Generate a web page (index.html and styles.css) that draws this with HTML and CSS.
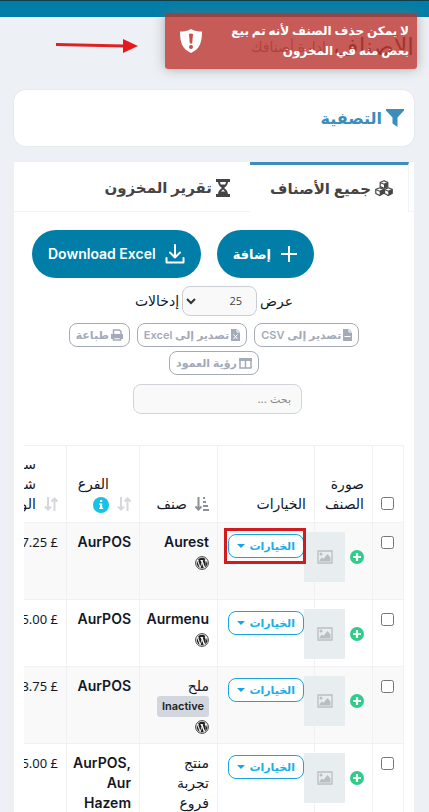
FILE: index.html
```html
<!DOCTYPE html>
<html lang="ar" dir="rtl">
<head>
<meta charset="utf-8">
<meta name="viewport" content="width=device-width, initial-scale=1">
<title>الأصناف</title>
<link rel="stylesheet" href="styles.css">
</head>
<body>
<svg class="sprite" aria-hidden="true">
  <symbol id="i-sort" viewBox="0 0 14 14"><path d="M4 0v12M1 9.500l3 3 3-3M10.500 14V2M7.500 4.500l3-3 3 3" fill="none" stroke="currentColor" stroke-width="2"/></symbol>
  <symbol id="i-sorted" viewBox="0 0 14 14"><path d="M3.500 0v12M.500 9.500l3 3 3-3" fill="none" stroke="currentColor" stroke-width="2"/><path d="M8 0h2v2H8zM8 4h3v2H8zM8 8h5v2H8zM8 12h6v2H8z" fill="currentColor"/></symbol>
  <symbol id="i-wp" viewBox="0 0 16 16"><circle cx="8" cy="8" r="7.300" fill="none" stroke="currentColor"/><path d="M8 2a6 6 0 0 1 4 1.500c-1 .5-1 1.500-.3 2.600.7 1.200.7 2 .3 3.300L11 12 8.700 5.200h.8v-.7H5.800v.7h.8l.9 2.500L6 12 3.700 5.200h.8v-.7H3.100A6 6 0 0 1 8 2zM2.500 5.800l3 7.800A6 6 0 0 1 2.500 5.800zM8.100 8.500l1.900 5.200a6 6 0 0 1-3.600.1zM13.400 5.500a6 6 0 0 1-2.400 7.700l1.900-5.400c.3-.9.5-1.600.5-2.300z" fill="currentColor"/></symbol>
  <symbol id="i-plus" viewBox="0 0 14 14"><circle cx="7" cy="7" r="7" fill="#2dce89"/><path d="M7 3v8M3 7h8" stroke="#fff" stroke-width="2.200"/></symbol>
  <symbol id="i-image" viewBox="0 0 16 14"><path d="M1 1h14v12H1z" fill="none" stroke="#b9bec1" stroke-width="1.300"/><circle cx="4" cy="4" r="1.500" fill="#b9bec1"/><path d="M2.500 11.500V10L5 7.500l1.500 1.300L10.500 4l3 3.500v4z" fill="#b9bec1"/></symbol>
</svg>

<header class="topbar"></header>

<main class="page">
  <div class="page-head">
    <h1>الأصناف</h1><small>إدارة أصنافك</small>
  </div>

  <section class="filter">
    <a href="#filter"><svg width="18" height="18" viewBox="0 0 18 18"><path d="M0 0h18v1.500L11.500 8.500V18L6.500 14.500v-6L0 1.500z" fill="currentColor"/></svg>التصفية</a>
  </section>

  <section class="panel">
    <nav class="tabs">
      <a class="tab tab-active" href="#all"><svg width="18" height="17" viewBox="0 0 18 17"><g fill="#fff" stroke="currentColor" stroke-width="1.200"><path d="M9 .8l3.800 1.700v4L9 8.200 5.200 6.500v-4zM4.700 7.800l3.800 1.700v4l-3.800 2-3.900-2v-4zM13.300 7.800l3.900 1.700v4l-3.900 2-3.800-2v-4z"/><path d="M5.200 2.500L9 4.200l3.800-1.700M.8 9.500l3.900 1.700 3.800-1.700M9.500 9.500l3.800 1.700 3.900-1.700"/></g><path d="M9 4.200l3.800-1.700v4L9 8.200zM4.700 11.200l3.800-1.700v4l-3.800 2zM13.300 11.200l3.900-1.700v4l-3.900 2z" fill="currentColor"/></svg>جميع الأصناف</a>
      <a class="tab" href="#report"><svg width="14" height="18" viewBox="0 0 14 18"><path d="M0 0h14v3H0zM0 15h14v3H0z" fill="currentColor"/><path d="M2 2c0 4 2 5.500 4 7-2 1.500-4 3-4 7h10c0-4-2-5.500-4-7 2-1.500 4-3 4-7z" fill="currentColor"/><path d="M4 3h6l-.7 2.500H4.700zM7 10.500l2 2H5z" fill="#fff"/></svg>تقرير المخزون</a>
    </nav>

    <div class="actions">
      <button type="button" class="pill"><svg width="18" height="18" viewBox="0 0 18 18"><path d="M9 1v16M1 9h16" stroke="#fff" stroke-width="2"/></svg>إضافة</button>
      <button type="button" class="pill"><svg width="20" height="20" viewBox="0 0 20 20"><path d="M10 1v12M5 8.500l5 5 5-5M1.500 14v4.500h17V14" fill="none" stroke="#fff" stroke-width="2" stroke-linejoin="round" stroke-linecap="round"/></svg><span class="latin">Download Excel</span></button>
    </div>

    <div class="length">
      <label for="len">عرض</label>
      <span class="select"><select id="len"><option>25</option></select><svg width="10" height="7" viewBox="0 0 10 7"><path d="M1 1l4 4 4-4" fill="none" stroke="#333" stroke-width="2"/></svg></span>
      <span>إدخالات</span>
    </div>

    <div class="exports">
      <button type="button"><svg width="9" height="12" viewBox="0 0 9 12"><path d="M0 0h6l3 3v9H0z" fill="currentColor"/><path d="M6 0v3h3M1.500 7.500h6" fill="none" stroke="#fff"/></svg><span>تصدير إلى <bdi>CSV</bdi></span></button>
      <button type="button"><svg width="9" height="12" viewBox="0 0 9 12"><path d="M0 0h6l3 3v9H0z" fill="currentColor"/><path d="M6 0v3h3M2.500 5.500l4 4.500M6.500 5.500l-4 4.500" fill="none" stroke="#fff"/></svg><span>تصدير إلى <bdi>Excel</bdi></span></button>
      <button type="button"><svg width="12" height="12" viewBox="0 0 12 12"><path d="M2.500 5V1h6l1.500 1.500V5M2.500 8.500h7V11h-7z" fill="none" stroke="currentColor" stroke-width="1.500"/><path d="M0 5h12v5h-2V8H2v2H0z" fill="currentColor"/></svg>طباعة</button>
      <button type="button"><svg width="13" height="11" viewBox="0 0 13 11"><path d="M1 2h11v8H1zM6.500 2v8" fill="none" stroke="currentColor" stroke-width="1.500"/><path d="M0 0h13v3H0z" fill="currentColor"/></svg>رؤية العمود</button>
    </div>

    <div class="search"><input type="search" placeholder="بحث ..." aria-label="بحث"></div>

    <div class="table-wrap">
      <table>
        <colgroup><col class="c-check"><col class="c-image"><col class="c-options"><col class="c-item"><col class="c-branch"><col class="c-price"></colgroup>
        <thead>
          <tr>
            <th><input type="checkbox" aria-label="تحديد الكل"></th>
            <th>صورة الصنف</th>
            <th>الخيارات</th>
            <th><div class="sortable sorted"><svg width="14" height="14"><use href="#i-sorted"/></svg><span>صنف</span></div></th>
            <th><div class="sortable"><svg width="14" height="14"><use href="#i-sort"/></svg><span>الفرع<br><svg class="info" width="16" height="16" viewBox="0 0 16 16"><circle cx="8" cy="8" r="8" fill="#17c1e8"/><path d="M7 3h2.200v2H7zM6 6.500h3.200v4.300h1V12H6v-1.200h1V7.700H6z" fill="#fff"/></svg></span></div></th>
            <th><div class="sortable"><svg width="14" height="14"><use href="#i-sort"/></svg><span>سعر<br>شراء<br>الوحدة</span></div></th>
          </tr>
        </thead>
        <tbody>
          <tr class="roomy">
            <td><input type="checkbox" aria-label="Aurest"></td>
            <td><div class="media"><svg width="14" height="14"><use href="#i-plus"/></svg><span class="thumb"><svg width="16" height="14"><use href="#i-image"/></svg></span></div></td>
            <td><span class="marked"><button type="button" class="options">الخيارات<i></i></button></span></td>
            <td><b>Aurest</b><br><svg class="wp" width="14" height="14"><use href="#i-wp"/></svg></td>
            <td><b>AurPOS</b></td>
            <td class="price">£ 7.25</td>
          </tr>
          <tr>
            <td><input type="checkbox" aria-label="Aurmenu"></td>
            <td><div class="media"><svg width="14" height="14"><use href="#i-plus"/></svg><span class="thumb"><svg width="16" height="14"><use href="#i-image"/></svg></span></div></td>
            <td><button type="button" class="options">الخيارات<i></i></button></td>
            <td><b>Aurmenu</b><br><svg class="wp" width="14" height="14"><use href="#i-wp"/></svg></td>
            <td><b>AurPOS</b></td>
            <td class="price">£ 5.00</td>
          </tr>
          <tr>
            <td><input type="checkbox" aria-label="ملح"></td>
            <td><div class="media"><svg width="14" height="14"><use href="#i-plus"/></svg><span class="thumb"><svg width="16" height="14"><use href="#i-image"/></svg></span></div></td>
            <td><button type="button" class="options">الخيارات<i></i></button></td>
            <td>ملح<span class="badge">Inactive</span><svg class="wp" width="14" height="14"><use href="#i-wp"/></svg></td>
            <td><b>AurPOS</b></td>
            <td class="price">£ 3.75</td>
          </tr>
          <tr>
            <td><input type="checkbox" aria-label="منتج تجربة فروع"></td>
            <td><div class="media"><svg width="14" height="14"><use href="#i-plus"/></svg><span class="thumb"><svg width="16" height="14"><use href="#i-image"/></svg></span></div></td>
            <td><button type="button" class="options">الخيارات<i></i></button></td>
            <td>منتج<br>تجربة<br>فروع</td>
            <td><b dir="ltr">AurPOS,<br>Aur<br>Hazem</b></td>
            <td class="price">£ 5.00</td>
          </tr>
        </tbody>
      </table>
    </div>
  </section>
</main>

<div class="toast" role="alert">
  <p>لا يمكن حذف الصنف لأنه تم بيع بعض منه في المخزون</p>
  <svg width="22" height="24" viewBox="0 0 22 24"><path d="M11 0c3 2 7 2.500 11 2.500C22 13 20 20 11 24 2 20 0 13 0 2.500 4 2.500 8 2 11 0z" fill="#fff"/><path d="M9 5q2-1 4 0l-.8 9.500H9.800z" fill="#c44f4b"/><circle cx="11" cy="18" r="2" fill="#c44f4b"/></svg>
</div>
<svg class="arrow" width="82" height="16" viewBox="0 0 82 16" aria-hidden="true"><path d="M0 6.500L68 8" stroke="#dd2226" stroke-width="3"/><path d="M67 1l15 7-15 7z" fill="#e31b1f"/></svg>
</body>
</html>
```
FILE: styles.css
```css
*, ::before, ::after { box-sizing: border-box; }
body {
  margin: 0;
  background: #edf1f5;
  color: #111827;
  font: 14px/20px Inter, "DejaVu Sans", sans-serif;
}
a { color: inherit; text-decoration: none; }
button, input, select { font: inherit; }
button { cursor: pointer; }
svg { flex: none; }
.sprite { position: absolute; width: 0; height: 0; }

.topbar { height: 17px; background: #007ea7; border-top: 1px solid #123e4c; }
.page { padding: 0 15px 0 14px; }
.page-head { display: flex; align-items: center; gap: 8px; height: 73px; padding: 0 0 14px; white-space: nowrap; }
.page-head h1 { margin: 0; font-size: 24px; line-height: 28px; font-weight: 500; color: #333; }
.page-head small { font-size: 14px; color: #777; }

.filter { height: 56px; padding: 0 10px; background: #fff; border-radius: 12px; box-shadow: 0 0 2px #d5dce4; color: #3c8dbc; }
.filter a { display: flex; align-items: center; gap: 4px; height: 56px; font-size: 16px; font-weight: 600; }

.panel { margin-top: 16px; background: #fff; }
.tabs { display: flex; padding-right: 5px; border-bottom: 1px solid #f1f2f4; }
.tab { display: flex; align-items: center; gap: 4px; height: 49px; padding: 3px 20px 0; font-size: 15px; font-weight: 600; color: #444; white-space: nowrap; }
.tab-active { padding: 0 15px 0 20px; margin-bottom: -1px; height: 50px; background: #fff; border-top: 3px solid #3c8dbc; border-right: 1px solid #f1f2f4; }

.actions { display: flex; justify-content: flex-end; gap: 16px; padding: 18px 18px 8px; }
.pill { display: flex; align-items: center; gap: 9px; height: 48px; padding: 0 16px; border: 0; border-radius: 24px; background: #007ea7; color: #fff; font-size: 13px; font-weight: 700; white-space: nowrap; }
.latin { font-size: 14px; font-weight: 600; }

.length { display: flex; justify-content: center; align-items: center; gap: 3px; }
.select { position: relative; display: flex; }
.select select { appearance: none; width: 75px; height: 30px; padding: 0 14px; border: 1px solid #c9ced6; border-radius: 8px; background: #f9f9fa; color: #444; font-family: "Open Sans", sans-serif; font-size: 11px; }
.select svg { position: absolute; left: 4px; top: 12px; }

.exports { display: flex; flex-wrap: wrap; justify-content: center; gap: 4px 7px; padding: 7px 40px 9px; }
.exports button { display: flex; align-items: center; gap: 2px; height: 24px; padding: 0 6px; border: 1px solid #a5abb5; border-radius: 8px; background: #fff; color: #a3aab8; font-size: 11px; font-weight: 600; white-space: nowrap; }

.search { display: flex; justify-content: center; padding-left: 7px; }
.search input { width: 169px; height: 30px; padding: 0 10px; border: 1px solid #d1d4d9; border-radius: 8px; background: #f9f9fa; font-size: 11px; }
.search input::placeholder { color: #888; }

.table-wrap { margin: 31px 10px 0; overflow: hidden; }
table { width: 419px; table-layout: fixed; border-collapse: collapse; }
.c-check { width: 31px; }
.c-image { width: 58px; }
.c-options { width: 97px; }
.c-item { width: 78px; }
.c-branch { width: 73px; }
.c-price { width: 82px; }
th, td { border: 1px solid #f0f1f2; text-align: right; }
th { height: 77px; padding: 8px; vertical-align: bottom; font-weight: 400; }
td { padding: 9px 8px 7px; vertical-align: top; }
tbody tr:nth-child(odd) { background: #f9f9f9; }
.roomy td { height: 77px; }
b { display: inline-block; font-weight: 600; text-align: right; }
input[type="checkbox"] { display: block; width: 13px; height: 13px; margin: 4px 1px; }
.sortable { display: flex; align-items: flex-end; gap: 8px; }
.sortable > svg { color: #d5d7dc; margin-bottom: 3px; }
.sorted > svg { color: #8b8f97; }
.info { display: inline-block; vertical-align: middle; }
.media { display: flex; align-items: center; gap: 5px; }
.thumb { display: flex; flex: none; align-items: center; justify-content: center; width: 41px; height: 50px; background: #e8edf0; }
.options { display: flex; align-items: center; justify-content: space-between; width: 76px; height: 24px; margin: 2px; padding: 0 8px; border: 1px solid #1ba3dc; border-radius: 8px; background: #fff; color: #17aeea; font-size: 11px; font-weight: 600; white-space: nowrap; }
.options i { border: 4px solid transparent; border-top-color: #17a5e0; border-bottom: 0; }
.marked { position: relative; display: block; }
.marked::after { content: ""; position: absolute; top: -6px; right: 0; width: 82px; height: 36px; border: 3px solid #d31a1f; }
.wp { display: block; margin: 3px 0 2px; color: #222; }
br + .wp { display: inline-block; margin: 0; vertical-align: middle; }
.badge { display: block; width: 52px; height: 21px; border-radius: 3px; background: #d2d6de; color: #222; font-size: 11px; font-weight: 600; text-align: center; }
.price { white-space: nowrap; font-family: "Noto Sans", "DejaVu Sans", sans-serif; font-size: 13px; }

.toast { position: absolute; top: 13px; right: 12px; display: flex; align-items: center; justify-content: space-between; width: 252px; min-height: 56px; padding: 8px 8px 8px 15px; border-radius: 3px; background: rgba(189, 54, 47, .8); color: #fff; box-shadow: 0 0 12px rgba(120, 120, 120, .6); }
.toast p { width: 190px; margin: 0; font-size: 12px; font-weight: 700; }
.arrow { position: absolute; top: 38px; left: 56px; }
```
